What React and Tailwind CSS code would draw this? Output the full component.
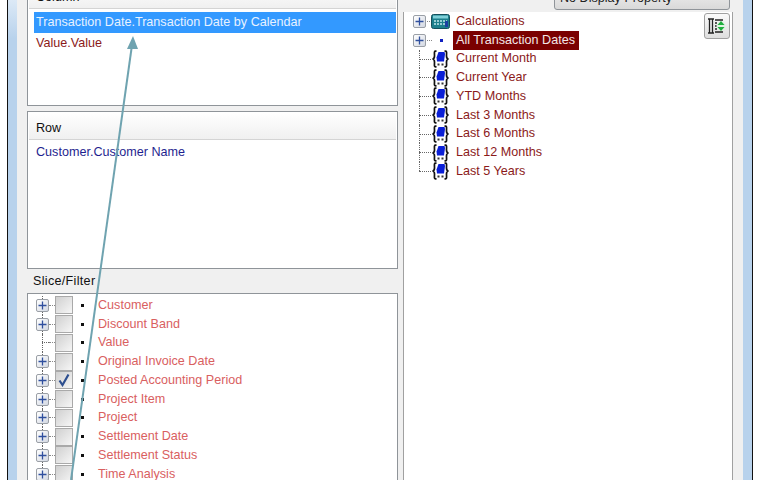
import React from "react";

const font = { fontFamily: '"Liberation Sans", Arial, sans-serif' };

const filterItems = [
	{ name: "Customer", expand: true },
	{ name: "Discount Band", expand: true },
	{ name: "Value", expand: false },
	{ name: "Original Invoice Date", expand: true },
	{ name: "Posted Accounting Period", expand: true, checked: true },
	{ name: "Project Item", expand: true },
	{ name: "Project", expand: true },
	{ name: "Settlement Date", expand: true },
	{ name: "Settlement Status", expand: true },
	{ name: "Time Analysis", expand: true },
];

const setItems = [
	"Current Month",
	"Current Year",
	"YTD Months",
	"Last 3 Months",
	"Last 6 Months",
	"Last 12 Months",
	"Last 5 Years",
];

const PlusBox = () => (
	<div className="relative z-10 flex h-[13px] w-[13px] shrink-0 items-center justify-center rounded-[2px] border border-[#9a9fa6] bg-gradient-to-br from-white to-[#d3d8e2]">
		<svg width="9" height="9" viewBox="0 0 9 9">
			<path d="M4.500 0.500v8M0.500 4.500h8" stroke="#2f4f9e" strokeWidth="1.300" />
		</svg>
	</div>
);

const CheckBox = ({ checked }) => (
	<div className="flex h-[18px] w-[18px] shrink-0 items-center justify-center border border-[#a9a9a9] bg-gradient-to-br from-[#d0d0d0] to-[#f6f6f6]">
		{checked && (
			<svg width="14" height="14" viewBox="0 0 14 14">
				<path d="M2.500 7.500l3 4.500L11.500 1.500" fill="none" stroke="#2d4f8f" strokeWidth="2.200" />
			</svg>
		)}
	</div>
);

const SetIcon = () => (
	<svg width="19" height="18" viewBox="0 0 19 18" className="shrink-0">
		<path d="M5.500 1.200H4.500C3 1.200 3.500 3 3.500 6 3.500 8 3 8.800 1.500 9 3 9.200 3.500 10 3.500 12 3.500 15 3 16.800 4.500 16.800H5.500M13.500 1.200H14.500C16 1.200 15.500 3 15.500 6 15.500 8 16 8.800 17.500 9 16 9.200 15.500 10 15.500 12 15.500 15 16 16.800 14.500 16.800H13.500" fill="none" stroke="#111" strokeWidth="1.700" />
		<path d="M7.500 2h6l.5 2-1 7.500H6L5.500 7.500z" fill="#0a1fd6" />
		<path d="M6.500 13.500h2V15.500h-2zM10.500 13.500h2V15.500h-2z" fill="#333" />
	</svg>
);

const CalcIcon = () => (
	<svg width="19" height="15" viewBox="0 0 19 15" className="shrink-0">
		<rect x="0.500" y="0.500" width="18" height="14" rx="2" fill="#1c7f8c" stroke="#14505c" />
		<rect x="2" y="1.500" width="15" height="3" fill="#7fd0d8" />
		<path d="M3 7h13M3 10h13" stroke="#bfe6ea" strokeWidth="1.400" strokeDasharray="2 1" />
		<path d="M14 7h3v6h-3z" fill="#1b3fa0" />
	</svg>
);

const SectionHeader = ({ children }) => (
	<div className="mx-px mt-px flex h-[27px] items-center border-b border-[#d4d4d4] bg-gradient-to-b from-white to-[#f0f0f0] pl-[7px] pt-[5px] text-[12.6px] text-[#111]">
		{children}
	</div>
);

const Arrow = () => (
	<svg width="759" height="480" viewBox="0 0 759 480" className="pointer-events-none absolute left-0 top-0 z-20">
		<path d="M132 45L71 480" stroke="#6fa3b0" strokeWidth="2" fill="none" />
		<path d="M133 36l5 13h-11z" fill="#6fa3b0" />
	</svg>
);

export default function App() {
	return (
		<div style={font} className="relative flex h-[480px] w-[759px] overflow-hidden bg-white pl-[7px] pr-[6px]">
			<div className="flex flex-1 border-x border-[#111]">
				<div className="w-[9px] shrink-0 bg-gradient-to-b from-[#dce9f6] from-0% via-[#b8d2ec] via-[8%] to-[#b8d2ec]" />

				<div className="flex flex-1 gap-[5px] bg-[#f0f0f0] pl-[10px] pr-[10px]">
					{/* left side */}
					<div className="-mt-[20px] flex w-[371px] shrink-0 flex-col">
						<div className="h-[126px] shrink-0 border border-[#8f9499] bg-white">
							<SectionHeader>Column</SectionHeader>
							<div className="ml-[6px] mr-px mt-[3px] flex h-[21px] items-center bg-[#3399ff] pl-[2px] text-[12.6px] text-[#e8f2ff]">
								Transaction Date.Transaction Date by Calendar
							</div>
							<div className="ml-[8px] flex h-[20px] items-center text-[12.6px] text-[#8b1a1a]">Value.Value</div>
						</div>

						<div className="mt-[5px] h-[158px] shrink-0 border border-[#8f9499] bg-white">
							<SectionHeader>Row</SectionHeader>
							<div className="ml-[8px] mt-[2px] flex h-[20px] items-center text-[12.6px] text-[#1f1f8f]">Customer.Customer Name</div>
						</div>

						<div className="flex h-[24px] shrink-0 items-center pl-[6px] pt-[1px] text-[12.6px] tracking-[0.3px] text-[#111]">Slice/Filter</div>

						<div className="flex-1 border border-[#8f9499] bg-white pl-[8px] pt-[2px]">
							{filterItems.map((item, index) => (
								<div key={index} className="relative flex h-[18.75px] items-center">
									{/* tree connector */}
									<div className="absolute bottom-0 left-[6px] top-0 border-l border-dotted border-[#666]" />
									{item.expand ? (
										<PlusBox />
									) : (
										<div className="relative z-10 flex h-[13px] w-[13px] shrink-0 justify-end">
											<div className="mt-[6px] w-[7px] border-t border-dotted border-[#666]" />
										</div>
									)}
									<div className="w-[6px] shrink-0 border-t border-dotted border-[#888]" />
									<CheckBox checked={item.checked} />
									<div className="ml-[8px] h-[3px] w-[3px] shrink-0 bg-[#111]" />
									<div className="ml-[14px] text-[12.6px] text-[#d9605f]">{item.name}</div>
								</div>
							))}
						</div>
					</div>

					{/* right side */}
					<div className="relative flex w-[330px] shrink-0 flex-col">
						<div className="flex h-[12px] justify-end pr-[3px]">
							<div className="-mt-[14px] flex h-[24px] w-[176px] items-center justify-between rounded-[3px] border border-[#8f9499] bg-gradient-to-b from-[#f2f2f2] to-[#d9d9d9] pl-[5px] pr-[9px] text-[12.6px] text-[#222]">
								<span>No Display Property</span>
								<svg width="7" height="4" viewBox="0 0 7 4">
									<path d="M0 0h7L3.500 4z" fill="#222" />
								</svg>
							</div>
						</div>

						<div className="flex-1 border-x border-[#a0a0a0] bg-white pl-[9px]">
							<div className="flex h-[18.75px] items-center">
								<PlusBox />
								<div className="mx-[1px] w-[3px] border-t border-dotted border-[#888]" />
								<CalcIcon />
								<div className="ml-[6px] text-[12.6px] text-[#8b1a1a]">Calculations</div>
							</div>
							<div className="flex h-[18.75px] items-center">
								<PlusBox />
								<div className="mx-[1px] w-[5px] border-t border-dotted border-[#888]" />
								<div className="ml-[7px] h-[3px] w-[3px] shrink-0 bg-[#1020c0]" />
								<div className="ml-[10px] flex h-[19px] w-[126px] items-center bg-[#7a0000] pl-[3px] text-[12.6px] text-[#f3e6e6]">
									All Transaction Dates
								</div>
							</div>
							{setItems.map((name, index) => (
								<div key={index} className="relative flex h-[18.75px] items-center pl-[18px]">
									<div className={`absolute left-[6px] top-0 border-l border-dotted border-[#666] ${index === setItems.length - 1 ? "h-[9px]" : "h-full"}`} />
									<div className="absolute left-[6px] top-[9px] w-[12px] border-t border-dotted border-[#666]" />
									<SetIcon />
									<div className="ml-[6px] text-[12.6px] text-[#8b1a1a]">{name}</div>
								</div>
							))}
						</div>

						{/* tool button over the tree */}
						<div className="absolute right-[3px] top-[13px] flex h-[26px] w-[26px] items-center justify-center rounded-[3px] border border-[#a0a0a0] bg-gradient-to-b from-[#fafafa] to-[#dedede]">
							<svg width="20" height="20" viewBox="0 0 20 20">
								<path d="M1 3h6M2.500 3v14M5.500 3v14M1 17h6M8 4h8M8 16h8M8 7h2M8 10h2M8 13h2" stroke="#222" strokeWidth="1.300" fill="none" />
								<circle cx="14" cy="10" r="4.500" fill="#dff3e2" />
								<path d="M14 5l3.500 4h-7zM14 15l-3.500-4h7z" fill="#1fae3d" />
							</svg>
						</div>
					</div>
				</div>

				<div className="w-[9px] shrink-0 bg-[#b8d2ec]" />
			</div>

			<Arrow />
		</div>
	);
}
